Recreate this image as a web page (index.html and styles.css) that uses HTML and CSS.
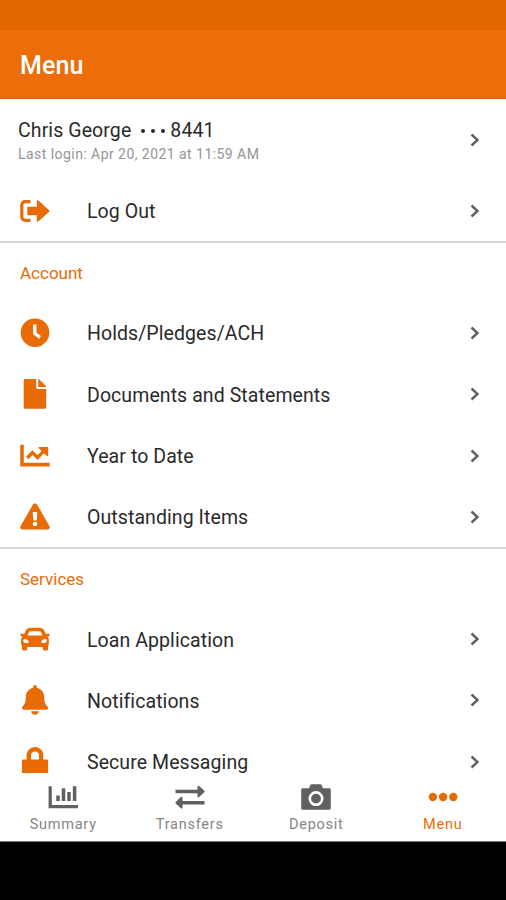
FILE: index.html
```html
<!DOCTYPE html>
<html lang="en">
<head>
    <meta charset="UTF-8">
    <meta name="viewport" content="width=device-width, initial-scale=1.0">
    <title>Menu</title>
    <link rel="stylesheet" href="styles.css">
</head>
<body>
    <div class="app">
        <div class="status-bar"></div>
        <header class="header">
            <h1>Menu</h1>
        </header>

        <main class="content">
            <div class="profile">
                <div class="profile-info">
                    <p class="profile-name"><span>Chris George</span><span class="mask"><i></i><i></i><i></i></span><span>8441</span></p>
                    <p class="last-login">Last login: Apr 20, 2021 at 11:59 AM</p>
                </div>
                <svg class="chevron" viewBox="0 0 10 14"><path d="M1.5 1.5 7.5 7l-6 5.5"/></svg>
            </div>
            <div class="row logout">
                <svg class="icon" viewBox="0 0 30 30">
                    <path d="M10.5 5.6H5.2a3.4 3.4 0 0 0-3.4 3.4v12a3.4 3.4 0 0 0 3.4 3.4h5.3" fill="none" stroke="currentColor" stroke-width="3.2"/>
                    <path d="M8.3 10.7h8.5V5.2c0-1 .9-1.4 1.6-.7l10.700 9.700c.6.5.6 1.100 0 1.600l-10.700 9.700c-.7.7-1.600.3-1.600-.7v-5.500H8.300c-.6 0-1-.4-1-1v-6.600c0-.6.4-1 1-1z"/>
                </svg>
                <span class="label">Log Out</span>
                <svg class="chevron" viewBox="0 0 10 14"><path d="M1.5 1.5 7.5 7l-6 5.5"/></svg>
            </div>

            <section class="group">
                <h2>Account</h2>
                <div class="row">
                    <svg class="icon" viewBox="0 0 30 30">
                        <circle cx="15" cy="14.7" r="14.3"/>
                        <path d="M14.8 6.5v9l5.200 3.800" fill="none" stroke="#fff" stroke-width="3.400"/>
                    </svg>
                    <span class="label">Holds/Pledges/ACH</span>
                    <svg class="chevron" viewBox="0 0 10 14"><path d="M1.5 1.5 7.5 7l-6 5.5"/></svg>
                </div>
                <div class="row">
                    <svg class="icon" viewBox="0 0 30 30">
                        <path d="M5 0h11.2v8.600c0 .8.6 1.400 1.400 1.400h8.600v18.300c0 .8-.6 1.400-1.400 1.400H5c-.8 0-1.300-.6-1.300-1.400V1.400C3.700.6 4.200 0 5 0z"/>
                        <path d="M18.200 0c.6 0 .9.2 1.200.5l6.300 6.200c.3.300.5.700.5 1.300h-8z"/>
                    </svg>
                    <span class="label">Documents and Statements</span>
                    <svg class="chevron" viewBox="0 0 10 14"><path d="M1.5 1.5 7.5 7l-6 5.5"/></svg>
                </div>
                <div class="row">
                    <svg class="icon" viewBox="0 0 30 30">
                        <path d="M2 3.700v19.900h27.700" fill="none" stroke="currentColor" stroke-width="3.600"/>
                        <path d="M7.200 17l5.300-5.400 5 5 7.500-7.700" fill="none" stroke="currentColor" stroke-width="3.400"/>
                        <path d="M19.300 6h8c.6 0 .9.300.9.900v7.600c0 .7-.8 1-1.300.5l-8.200-7.700c-.5-.5-.1-1.300.6-1.300z"/>
                    </svg>
                    <span class="label">Year to Date</span>
                    <svg class="chevron" viewBox="0 0 10 14"><path d="M1.5 1.5 7.5 7l-6 5.5"/></svg>
                </div>
                <div class="row">
                    <svg class="icon" viewBox="0 0 30 30">
                        <path d="M17.200 2.800l12.300 21.400c.9 1.600-.2 3.200-1.900 3.200H2.400c-1.700 0-2.800-1.600-1.900-3.200L12.800 2.800c1-1.700 3.400-1.700 4.400 0z"/>
                        <path d="M12.700 10h4.600l-.6 8.400h-3.400z" fill="#fff"/>
                        <circle cx="15" cy="22" r="2.300" fill="#fff"/>
                    </svg>
                    <span class="label">Outstanding Items</span>
                    <svg class="chevron" viewBox="0 0 10 14"><path d="M1.5 1.5 7.5 7l-6 5.5"/></svg>
                </div>
            </section>

            <section class="group">
                <h2>Services</h2>
                <div class="row">
                    <svg class="icon" viewBox="0 0 30 30">
                        <path fill-rule="evenodd" d="M10.500 3.700h9c2.400 0 4.300 1.400 5 3.400l1.100 2.700h3.200c.6 0 1 .5.900 1l-.3 1c-.1.500-.5.700-1 .7h-1.200c1.100.8 1.700 2 1.700 3.400v3.600c0 1-.3 1.700-.8 2.300v2.900c0 1-.8 1.800-1.800 1.800h-1.700c-1 0-1.800-.8-1.800-1.800v-1.800H7.200v1.800c0 1-.8 1.800-1.800 1.800H3.700c-1 0-1.800-.8-1.800-1.800v-2.900c-.5-.6-.8-1.300-.8-2.300v-3.600c0-1.400.6-2.600 1.700-3.400H1.600c-.5 0-.9-.2-1-.7l-.3-1c-.1-.5.3-1 .9-1h3.200l1.100-2.700c.7-2 2.600-3.400 5-3.400zm0 3.600c-.8 0-1.400.4-1.700 1.100l-1.200 3.100h14.800l-1.200-3.100c-.3-.7-.9-1.100-1.700-1.100z"/>
                        <path d="M4.700 15c2 0 4 1.600 4 3 0 .8-1 1-2.300 1-1.800 0-3.100-.6-3.100-2.100 0-1.200.5-1.900 1.400-1.900zM25.300 15c-2 0-4 1.600-4 3 0 .8 1 1 2.300 1 1.800 0 3.100-.6 3.100-2.100 0-1.200-.5-1.900-1.400-1.900z" fill="#fff"/>
                    </svg>
                    <span class="label">Loan Application</span>
                    <svg class="chevron" viewBox="0 0 10 14"><path d="M1.5 1.5 7.5 7l-6 5.5"/></svg>
                </div>
                <div class="row">
                    <svg class="icon" viewBox="0 0 30 30">
                        <path d="M15 0c1 0 1.800.8 1.800 1.800v1c4.300.9 7.400 4.600 7.400 9.200 0 6 1.500 7.600 3.200 9.600.5.500.7 1 .7 1.500 0 1-.7 1.700-1.900 1.700H3.800c-1.200 0-1.900-.7-1.900-1.700 0-.5.200-1 .7-1.500C4.300 19.600 5.800 18 5.800 12c0-4.600 3.100-8.300 7.400-9.200v-1C13.200.8 14 0 15 0zM11.200 26.200h7.600c0 2-1.700 3.500-3.800 3.500s-3.800-1.500-3.800-3.500z"/>
                    </svg>
                    <span class="label">Notifications</span>
                    <svg class="chevron" viewBox="0 0 10 14"><path d="M1.5 1.5 7.5 7l-6 5.5"/></svg>
                </div>
                <div class="row">
                    <svg class="icon" viewBox="0 0 30 30">
                        <path fill-rule="evenodd" d="M15 0c4.700 0 8.300 3.700 8.300 8.300v4.300h3.400c.8 0 1.400.6 1.400 1.400v12.200H1.900V14c0-.8.6-1.400 1.400-1.400h3.400V8.300C6.700 3.700 10.300 0 15 0zm0 4.400c-2.200 0-4 1.700-4 3.900v4.300h8V8.300c0-2.200-1.800-3.900-4-3.900z"/>
                    </svg>
                    <span class="label">Secure Messaging</span>
                    <svg class="chevron" viewBox="0 0 10 14"><path d="M1.5 1.5 7.5 7l-6 5.5"/></svg>
                </div>
            </section>
        </main>

        <nav class="tabs">
            <div class="tab">
                <svg class="tab-icon" viewBox="0 0 30 30">
                    <path d="M2.200 4.200v20.500h27.800" stroke-width="3.200"/>
                    <path d="M10 13.500v5.500M15.500 6.200V19M21 10v9M26.600 4.200V19" stroke-width="3.500"/>
                </svg>
                <span>Summary</span>
            </div>
            <div class="tab">
                <svg class="tab-icon" viewBox="0 0 30 30">
                    <path d="M.5 9.500h23M6.500 20.700h23" stroke-width="3.400"/>
                    <path class="solid" d="M22.500 4.500c0-1 1-1.200 1.600-.6l5.200 4.900c.4.400.4 1 0 1.400l-5.200 4.900c-.6.600-1.600.4-1.600-.6zM7.500 15.700c0-1-1-1.200-1.600-.6L.7 20c-.4.400-.4 1 0 1.400l5.200 4.900c.6.600 1.600.4 1.600-.6z"/>
                </svg>
                <span>Transfers</span>
            </div>
            <div class="tab">
                <svg class="tab-icon" viewBox="0 0 30 30">
                    <path class="solid" d="M10.700 2.300h8.600c.7 0 1.200.3 1.500 1l1.200 2.900h6.200c1 0 1.600.6 1.600 1.600v18.300c0 1-.6 1.600-1.600 1.600H1.800c-1 0-1.600-.6-1.600-1.600V7.800c0-1 .6-1.600 1.600-1.600H8l1.200-2.900c.3-.7.8-1 1.500-1z"/>
                    <circle class="lens" cx="15" cy="16.600" r="6.200"/>
                </svg>
                <span>Deposit</span>
            </div>
            <div class="tab active">
                <svg class="tab-icon" viewBox="0 0 30 30">
                    <circle class="solid" cx="4.900" cy="15" r="4.200"/>
                    <circle class="solid" cx="15.100" cy="15" r="4.200"/>
                    <circle class="solid" cx="25.300" cy="15" r="4.200"/>
                </svg>
                <span>Menu</span>
            </div>
        </nav>
        <div class="system-nav"></div>
    </div>
</body>
</html>
```
FILE: styles.css
```css
* {
    margin: 0;
    padding: 0;
    box-sizing: border-box;
}

:root {
    --primary: #e96b06;
    --primary-dark: #e06600;
    --header: #eb6e0b;
    --text: #2a2a2a;
    --text-muted: #959595;
    --divider: #d6d6d6;
}

body {
    font-family: Roboto, "Liberation Sans", sans-serif;
    background: #fff;
    color: var(--text);
}

.app {
    display: flex;
    flex-direction: column;
    height: 900px;
    overflow: hidden;
}

/* Header */
.status-bar {
    height: 30px;
    background: var(--primary-dark);
}

.header {
    display: flex;
    align-items: center;
    height: 69px;
    padding: 3px 20px 0;
    background: var(--header);
    border-bottom: 1px solid #dd5c08;
    color: #fff;
}

.header h1 {
    font-size: 25px;
    font-weight: 500;
    letter-spacing: 0.1px;
}

/* Scrolling list */
.content {
    flex: 1;
    min-height: 0;
    overflow: hidden;
}

.profile {
    display: flex;
    align-items: center;
    justify-content: space-between;
    height: 81px;
    padding: 0 26px 0 18px;
}

.profile-info {
    padding-top: 5px;
}

.profile-name {
    display: flex;
    align-items: center;
    font-size: 19.5px;
    line-height: 24px;
    letter-spacing: 0.1px;
}

.mask {
    display: flex;
    gap: 6px;
    margin: 0 5px 0 10px;
}

.mask i {
    width: 4px;
    height: 4px;
    border-radius: 50%;
    background: var(--text);
}

.last-login {
    font-size: 14px;
    line-height: 22px;
    letter-spacing: 0.45px;
    color: var(--text-muted);
}

.row {
    display: flex;
    align-items: center;
    height: 61.3px;
    padding: 0 26px 0 20px;
}

.icon {
    width: 30px;
    height: 30px;
    margin-right: 37px;
    color: var(--primary);
    fill: var(--primary);
}

.label {
    flex: 1;
    padding-top: 2px;
    font-size: 19.5px;
    letter-spacing: 0.08px;
}

.chevron {
    width: 10px;
    height: 14px;
    fill: none;
    stroke: #606060;
    stroke-width: 2.4;
}

.group {
    border-top: 2px solid var(--divider);
}

.group h2 {
    height: 59px;
    padding-left: 20px;
    font-size: 17px;
    font-weight: 400;
    line-height: 61px;
    color: var(--primary);
}

/* Bottom tabs */
.tabs {
    display: flex;
    height: 69px;
    border-bottom: 1px solid #777;
}

.tab {
    flex: 1;
    display: flex;
    flex-direction: column;
    align-items: center;
    padding-top: 9px;
    font-size: 14.5px;
    line-height: 26px;
    letter-spacing: 0.75px;
    color: #858585;
}

.tab-icon {
    width: 30px;
    height: 30px;
    fill: none;
    stroke: #606060;
}

.tab-icon .solid {
    fill: #606060;
    stroke: none;
}

.tab-icon .lens {
    stroke: #fff;
    stroke-width: 2.6;
}

.tab.active {
    color: var(--primary);
}

.tab.active .solid {
    fill: var(--primary);
}

.system-nav {
    height: 58px;
    background: #000;
}
```
